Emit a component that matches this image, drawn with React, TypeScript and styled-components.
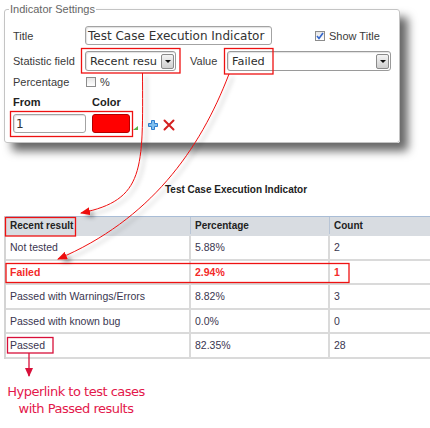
import React from "react";
import styled, { createGlobalStyle } from "styled-components";

const Global = createGlobalStyle`
  html, body { margin: 0; padding: 0; background: #fff; }
  * { box-sizing: border-box; }
`;

const Page = styled.div`
  position: relative;
  width: 430px;
  height: 428px;
  overflow: hidden;
  background: #fff;
  font-family: "Liberation Sans", Arial, sans-serif;
  color: #333;
`;

const SettingsWrap = styled.div`
  padding: 3px 0 0 4px;
`;

const Fieldset = styled.fieldset`
  width: 395px;
  margin: 0;
  padding: 0;
  border: 1px solid #c4c4c4;
  border-radius: 3px;
  background: #fff;
  box-shadow: 8px 8px 10px rgba(0, 0, 0, 0.6);
`;

const Legend = styled.legend`
  margin-left: 4px;
  padding: 0 1px;
  font-size: 11px;
  line-height: 13px;
  color: #666;
`;

const Inner = styled.div`
  padding: 10px 8px 9px 8px;
  display: flex;
  flex-direction: column;
`;

const Row = styled.div<{ $mt?: number; $h: number }>`
  display: flex;
  align-items: center;
  height: ${(p) => p.$h}px;
  margin-top: ${(p) => p.$mt ?? 0}px;
`;

const Label = styled.span<{ $w?: number; $ml?: number; $bold?: boolean }>`
  flex: none;
  width: ${(p) => (p.$w ? `${p.$w}px` : "auto")};
  margin-left: ${(p) => p.$ml ?? 0}px;
  font-size: 11px;
  font-weight: ${(p) => (p.$bold ? 700 : 400)};
  color: ${(p) => (p.$bold ? "#222" : "#3a3a3a")};
  white-space: nowrap;
`;

const TextInput = styled.div<{ $w: number }>`
  flex: none;
  width: ${(p) => p.$w}px;
  height: 19px;
  border: 1px solid #a3a3a3;
  border-radius: 3px;
  box-shadow: inset 1px 1px 1px rgba(0, 0, 0, 0.12);
  padding-left: 2px;
  display: flex;
  align-items: center;
  font-family: "DejaVu Sans", Verdana, sans-serif;
  font-size: 12px;
  color: #333;
  white-space: nowrap;
  overflow: hidden;
`;

const Select = styled.div<{ $w: number }>`
  flex: none;
  width: ${(p) => p.$w}px;
  height: 20px;
  border: 1px solid #9a9a9a;
  border-radius: 3px;
  box-shadow: inset 1px 1px 1px rgba(0, 0, 0, 0.12);
  padding: 0 1px 0 4px;
  display: flex;
  align-items: center;
  gap: 2px;
  font-family: "DejaVu Sans", Verdana, sans-serif;
  font-size: 11.3px;
  color: #2e2e2e;
  white-space: nowrap;
`;

const SelectText = styled.span`
  flex: 1;
  min-width: 0;
`;

const DropButton = styled.span`
  flex: none;
  width: 13px;
  height: 15px;
  border: 1px solid #8a8a8a;
  border-radius: 2px;
  background: linear-gradient(#f4f4f4, #cfcfcf);
  display: flex;
  align-items: center;
  justify-content: center;
  &::after {
    content: "";
    border-left: 3px solid transparent;
    border-right: 3px solid transparent;
    border-top: 3px solid #111;
  }
`;

const Check = styled.span<{ $ml?: number }>`
  flex: none;
  width: 10px;
  height: 10px;
  margin-left: ${(p) => p.$ml ?? 0}px;
  margin-right: 4px;
  border: 1px solid #8c8c8c;
  background: linear-gradient(#e6e6e6, #fff);
  display: flex;
  align-items: center;
  justify-content: center;
`;

const Swatch = styled.div`
  flex: none;
  width: 38px;
  height: 19px;
  margin-left: 6px;
  background: #ff0000;
  border: 1px solid #b20000;
  border-radius: 3px;
`;

const Corner = styled.span`
  flex: none;
  width: 0;
  height: 0;
  margin: 9px 0 0 3px;
  border-left: 5px solid transparent;
  border-bottom: 4px solid #58b348;
`;

const IconSlot = styled.span<{ $ml: number }>`
  flex: none;
  display: flex;
  margin-left: ${(p) => p.$ml}px;
  margin-top: 2px;
`;

const TableSection = styled.div`
  margin-top: 41px;
  padding-left: 4px;
  width: 468px;
`;

const Caption = styled.div`
  text-align: center;
  font-size: 10px;
  line-height: 12px;
  font-weight: 700;
  color: #222;
  margin-bottom: 20px;
`;

const Grid = styled.div`
  border-left: 2px solid #d4d4d4;
`;

const TRow = styled.div<{ $head?: boolean }>`
  display: grid;
  grid-template-columns: 185px 139px 1fr;
  height: ${(p) => (p.$head ? 20 : 24.5)}px;
  background: ${(p) => (p.$head ? "#d8dce1" : "#fff")};
  border-top: ${(p) => (p.$head ? "1px solid #a9bdd6" : "none")};
  border-bottom: 2px solid ${(p) => (p.$head ? "#d8dce1" : "#dadada")};
`;

const Cell = styled.div<{ $head?: boolean; $red?: boolean; $last?: boolean }>`
  display: flex;
  align-items: center;
  padding-left: 4px;
  border-right: ${(p) => (p.$last ? "none" : p.$head ? "1px solid #b8c5d6" : "2px solid #dadada")};
  font-size: ${(p) => (p.$head ? 10 : 10.5)}px;
  font-weight: ${(p) => (p.$head || p.$red ? 700 : 400)};
  color: ${(p) => (p.$red ? "#f32a2a" : p.$head ? "#222" : "#3a3650")};
  white-space: nowrap;
`;

const Note = styled.div`
  margin-top: 24px;
  width: 152px;
  text-align: center;
  font-family: "DejaVu Sans", sans-serif;
  font-size: 13px;
  line-height: 17px;
  letter-spacing: -0.5px;
  color: #e3184b;
`;

const Overlay = styled.svg`
  position: absolute;
  left: 0;
  top: 0;
  pointer-events: none;
`;

const rows = [
  { name: "Not tested", pct: "5.88%", count: "2" },
  { name: "Failed", pct: "2.94%", count: "1", red: true },
  { name: "Passed with Warnings/Errors", pct: "8.82%", count: "3" },
  { name: "Passed with known bug", pct: "0.0%", count: "0" },
  { name: "Passed", pct: "82.35%", count: "28" },
];

const PlusIcon = () => (
  <svg width="10" height="10" viewBox="0 0 10 10">
    <path d="M3.5 0.5h3v3h3v3h-3v3h-3v-3h-3v-3h3z" fill="#7fbfef" stroke="#2f7fcf" strokeWidth="1" />
  </svg>
);

const CrossIcon = () => (
  <svg width="12" height="12" viewBox="0 0 12 12">
    <path d="M1.5 1.5L10.5 10.5M10.5 1.5L1.5 10.5" stroke="#d42020" strokeWidth="2" strokeLinecap="round" />
  </svg>
);

const Tick = () => (
  <svg width="8" height="8" viewBox="0 0 8 8">
    <path d="M1 4l2 2.5L7 1" fill="none" stroke="#3366cc" strokeWidth="1.6" />
  </svg>
);

export default function App() {
  return (
    <Page>
      <Global />
      <SettingsWrap>
        <Fieldset>
          <Legend>Indicator Settings</Legend>
          <Inner>
            <Row $h={19}>
              <Label $w={72}>Title</Label>
              <TextInput $w={187}>Test Case Execution Indicator</TextInput>
              <Check $ml={43}>
                <Tick />
              </Check>
              <Label>Show Title</Label>
            </Row>
            <Row $h={20} $mt={6}>
              <Label $w={72}>Statistic field</Label>
              <Select $w={91}>
                <SelectText>Recent resu</SelectText>
                <DropButton />
              </Select>
              <Label $w={37} $ml={14}>Value</Label>
              <Select $w={164}>
                <SelectText>Failed</SelectText>
                <DropButton />
              </Select>
            </Row>
            <Row $h={12} $mt={5}>
              <Label $w={72}>Percentage</Label>
              <Check $ml={1} />
              <Label>%</Label>
            </Row>
            <Row $h={12} $mt={8}>
              <Label $w={79} $bold>From</Label>
              <Label $bold>Color</Label>
            </Row>
            <Row $h={19} $mt={6}>
              <TextInput $w={73}>1</TextInput>
              <Swatch />
              <Corner />
              <IconSlot $ml={10}>
                <PlusIcon />
              </IconSlot>
              <IconSlot $ml={5}>
                <CrossIcon />
              </IconSlot>
            </Row>
          </Inner>
        </Fieldset>
      </SettingsWrap>

      <TableSection>
        <Caption>Test Case Execution Indicator</Caption>
        <Grid>
          <TRow $head>
            <Cell $head>Recent result</Cell>
            <Cell $head>Percentage</Cell>
            <Cell $head $last>Count</Cell>
          </TRow>
          {rows.map((r) => (
            <TRow key={r.name}>
              <Cell $red={r.red}>{r.name}</Cell>
              <Cell $red={r.red}>{r.pct}</Cell>
              <Cell $red={r.red} $last>{r.count}</Cell>
            </TRow>
          ))}
        </Grid>
      </TableSection>

      <Note>
        Hyperlink to test cases
        <br />
        with Passed results
      </Note>

      <Overlay width="430" height="428" viewBox="0 0 430 428">
        <defs>
          <filter id="sh" x="-20%" y="-20%" width="150%" height="150%">
            <feDropShadow dx="4" dy="3" stdDeviation="2" floodColor="#000" floodOpacity="0.35" />
          </filter>
          <marker id="ah" markerWidth="10" markerHeight="8" refX="9" refY="4" orient="auto" markerUnits="userSpaceOnUse">
            <path d="M0 0L10 4L0 8z" fill="#ee1111" />
          </marker>
          <marker id="ah2" markerWidth="9" markerHeight="8" refX="8" refY="4" orient="auto" markerUnits="userSpaceOnUse">
            <path d="M0 0L9 4L0 8z" fill="#d8103a" />
          </marker>
        </defs>
        <g fill="none" stroke="#ee1111" strokeWidth="1.3">
          <rect x="81.5" y="48.5" width="98.5" height="24.5" />
          <rect x="224.5" y="48.5" width="48.5" height="25.5" />
          <rect x="10.5" y="111.5" width="122" height="25" />
          <rect x="5.5" y="217.5" width="70" height="18.5" />
          <rect x="6" y="263.5" width="343" height="19" />
          <rect x="7.5" y="337.5" width="45.5" height="15.5" stroke="#d8103a" />
        </g>
        <g fill="none" stroke="#ee1111" strokeWidth="1" filter="url(#sh)">
          <path d="M142.5 73 C143 170 145 200 81 213" markerEnd="url(#ah)" />
          <path d="M229 74 C200 150 150 220 58 259" markerEnd="url(#ah)" />
        </g>
        <path d="M29 353 L29 376" stroke="#d8103a" strokeWidth="1.3" fill="none" markerEnd="url(#ah2)" />
      </Overlay>
    </Page>
  );
}
